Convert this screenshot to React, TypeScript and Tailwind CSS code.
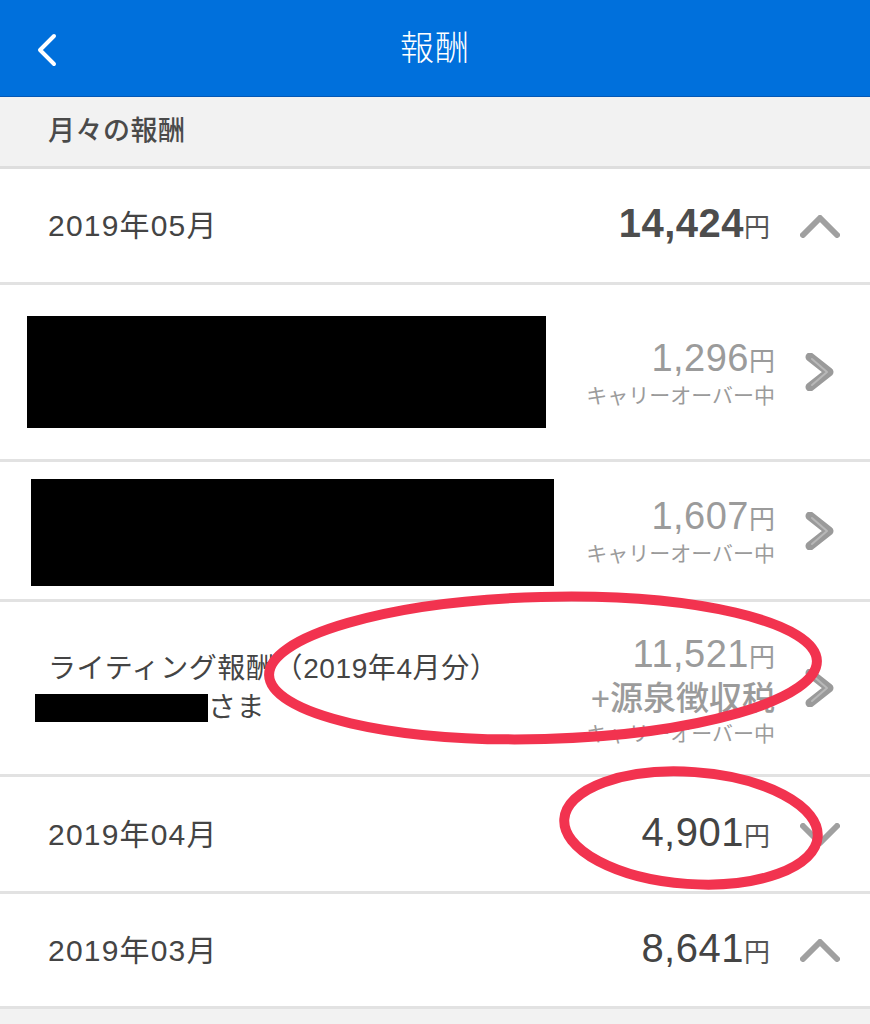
import React from "react";

const jp = "font-['Liberation_Sans','Noto_Sans_CJK_JP',sans-serif]";

const ChevronUp = () => (
  <svg width="40" height="26" viewBox="0 0 40 26" className="blur-[0.6px]">
    <polyline points="3,22 20,5 37,22" fill="none" stroke="#a0a0a0" strokeWidth="6" strokeLinecap="round" strokeLinejoin="round" />
  </svg>
);

const ChevronDown = () => (
  <svg width="40" height="26" viewBox="0 0 40 26" className="blur-[0.6px]">
    <polyline points="3,5 20,22 37,5" fill="none" stroke="#a0a0a0" strokeWidth="6" strokeLinecap="round" strokeLinejoin="round" />
  </svg>
);

const ChevronRight = () => (
  <svg width="32" height="38" viewBox="0 0 32 38" className="blur-[0.6px]">
    <polyline points="6,4 25,19 6,34" fill="none" stroke="#9a9a9a" strokeWidth="9" strokeLinecap="round" strokeLinejoin="round" />
    <polyline points="8,6 23,19 8,32" fill="none" stroke="#b8b8b8" strokeWidth="2" strokeLinecap="round" strokeLinejoin="round" />
  </svg>
);

const MonthRow = ({
  label,
  amount,
  bold,
  open,
  height,
}: {
  label: string;
  amount: string;
  bold?: boolean;
  open?: boolean;
  height: string;
}) => (
  <div className={`flex items-center ${height} border-b-[3px] border-[#e2e2e2] bg-white pl-[48px] pr-[20px]`}>
    <div className="flex-1 text-[30px] tracking-[1.2px] text-[#444]">{label}</div>
    <div className="flex items-baseline text-[#444]">
      <span className={`text-[40px] leading-none tracking-[0.5px] ${bold ? "font-bold text-[#4d4d4d]" : "font-medium"}`}>{amount}</span>
      <span className="text-[26px] text-[#555]">円</span>
    </div>
    <div className="ml-[20px] flex w-[60px] justify-center">{open ? <ChevronUp /> : <ChevronDown />}</div>
  </div>
);

const GrayAmount = ({ amount }: { amount: string }) => (
  <div className="flex items-baseline justify-end text-[#9b9b9b]">
    <span className="text-[38px] font-medium leading-none tracking-[0.5px]">{amount}</span>
    <span className="text-[26px]">円</span>
  </div>
);

const Carry = () => <div className="text-[21px] leading-[28px] text-[#9b9b9b]">キャリーオーバー中</div>;

export default function App() {
  return (
    <div className={`relative min-h-[1024px] w-full overflow-hidden bg-[#f2f2f2] ${jp}`}>
      <header className="relative flex h-[97px] items-center justify-center border-b border-[#0558b5] bg-[#0070dc]">
        <svg className="absolute left-[34px] top-[32px]" width="26" height="36" viewBox="0 0 26 36">
          <polyline points="20,4 6,18 20,32" fill="none" stroke="#fff" strokeWidth="4" strokeLinecap="round" strokeLinejoin="round" />
        </svg>
        <h1 className="text-[34px] font-light tracking-[1px] text-white">報酬</h1>
      </header>

      <div className="flex h-[72px] items-center border-b-[3px] border-[#dedede] bg-[#f2f2f2] pl-[48px]">
        <span className="text-[27px] font-medium tracking-[0.5px] text-[#4a4a4a]">月々の報酬</span>
      </div>

      <MonthRow label="2019年05月" amount="14,424" bold open height="h-[116px]" />

      <div className="flex h-[177px] items-center border-b-[3px] border-[#e2e2e2] bg-white pl-[27px] pr-[20px]">
        <div className="flex-1">
          <div className="h-[112px] w-[519px] bg-black" />
        </div>
        <div className="mr-[-5px] mt-[4px] text-right">
          <GrayAmount amount="1,296" />
          <Carry />
        </div>
        <div className="ml-[20px] flex w-[60px] justify-center">
          <ChevronRight />
        </div>
      </div>

      <div className="flex h-[140px] items-center border-b-[3px] border-[#e2e2e2] bg-white pl-[31px] pr-[20px]">
        <div className="flex-1">
          <div className="mt-[4px] h-[107px] w-[523px] bg-black" />
        </div>
        <div className="mr-[-5px] mt-[4px] text-right">
          <GrayAmount amount="1,607" />
          <Carry />
        </div>
        <div className="ml-[20px] flex w-[60px] justify-center">
          <ChevronRight />
        </div>
      </div>

      <div className="flex h-[175px] items-center border-b-[3px] border-[#e2e2e2] bg-white pl-[35px] pr-[20px]">
        <div className="flex-1 text-[28px] leading-[39px] tracking-[0.6px] text-[#444]">
          <div className="pl-[13px]">ライティング報酬（2019年4月分）</div>
          <div className="flex items-center">
            <span className="inline-block h-[28px] w-[173px] bg-black" />
            <span>さま</span>
          </div>
        </div>
        <div className="mr-[-5px] mt-[6px] text-right">
          <GrayAmount amount="11,521" />
          <div className="text-[33px] font-medium leading-[42px] text-[#9b9b9b]">+源泉徴収税</div>
          <Carry />
        </div>
        <div className="ml-[20px] flex w-[60px] justify-center">
          <ChevronRight />
        </div>
      </div>

      <MonthRow label="2019年04月" amount="4,901" height="h-[117px]" />
      <MonthRow label="2019年03月" amount="8,641" open height="h-[115px]" />

      <svg className="pointer-events-none absolute left-0 top-0" width="870" height="1024" viewBox="0 0 870 1024">
        <ellipse cx="543" cy="668" rx="274" ry="71" fill="none" stroke="#f2334f" strokeWidth="10" transform="rotate(-1.5 543 668)" />
        <ellipse cx="691" cy="828" rx="127" ry="56" fill="none" stroke="#f2334f" strokeWidth="10" transform="rotate(4 691 828)" />
      </svg>
    </div>
  );
}
